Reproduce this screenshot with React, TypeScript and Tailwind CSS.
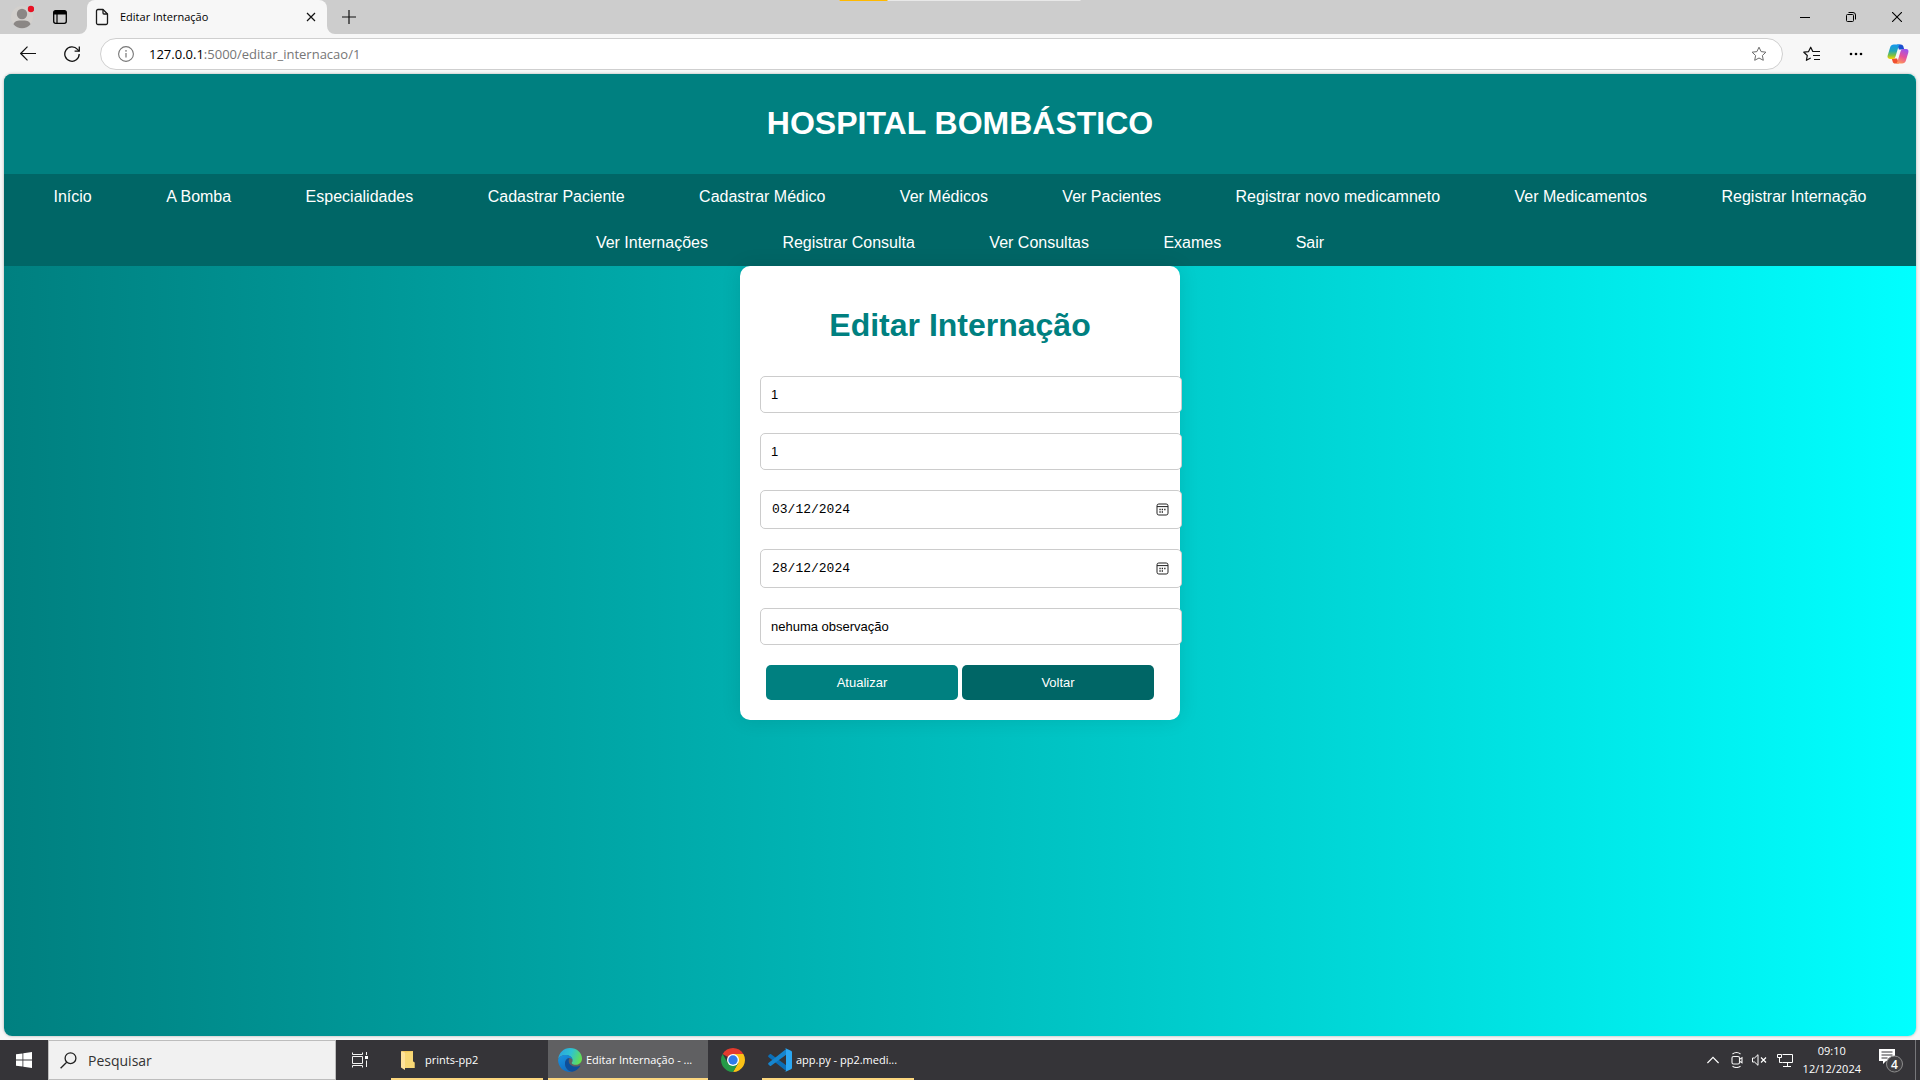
import React from "react";

const uiFont = "font-['Open_Sans',sans-serif]";
const pageFont = "font-['Liberation_Sans',Arial,sans-serif]";

const navLinks = [
  "Início",
  "A Bomba",
  "Especialidades",
  "Cadastrar Paciente",
  "Cadastrar Médico",
  "Ver Médicos",
  "Ver Pacientes",
  "Registrar novo medicamneto",
  "Ver Medicamentos",
  "Registrar Internação",
  "Ver Internações",
  "Registrar Consulta",
  "Ver Consultas",
  "Exames",
  "Sair",
];

function TabStrip() {
  return (
    <div className="relative flex h-[34px] items-center bg-[#cdcdcd] text-black">
      <button aria-label="Perfil" className="ml-[10px] flex size-6 items-center justify-center">
        <svg width="24" height="24" viewBox="0 0 24 24">
          <circle cx="12" cy="12" r="11" fill="#d3d0cd" />
          <circle cx="12" cy="9" r="5.2" fill="#8b8785" />
          <path d="M3.5 19.2C4.500 15.800 8 15.500 12 15.500s7.500.3 8.500 3.700A11 11 0 0 1 3.500 19.200z" fill="#8b8785" />
          <circle cx="21" cy="4" r="3.200" fill="#e81224" />
        </svg>
      </button>
      <button aria-label="Menu de guias" className="ml-[18px] flex size-4 items-center justify-center">
        <svg width="16" height="16" viewBox="0 0 16 16" fill="none" stroke="#000">
          <rect x="1.700" y="1.700" width="12.600" height="12.600" rx="2" strokeWidth="1.300" />
          <path d="M1.500 4a2.500 2.500 0 0 1 2.500-2.500h8A2.500 2.500 0 0 1 14.500 4v1.500h-13z" fill="#000" stroke="none" />
          <path d="M5 5v9" strokeWidth="1.200" />
        </svg>
      </button>
      <div className="ml-[11px] flex h-full items-end">
        <svg width="8" height="8" viewBox="0 0 8 8"><path d="M8 0v8H0a8 8 0 0 0 8-8z" fill="#f7f7f7" /></svg>
        <div className="flex h-[34px] w-60 items-center rounded-t-lg bg-[#f7f7f7] pr-2 pl-2">
          <svg width="14" height="18" viewBox="0 0 14 18" fill="none" stroke="#1b1b1b" strokeWidth="1.300" strokeLinejoin="round">
            <path d="M3 1.500h5L12.500 6v9a1.500 1.500 0 0 1-1.500 1.500H3A1.500 1.500 0 0 1 1.500 15V3A1.500 1.500 0 0 1 3 1.500z" />
            <path d="M8 1.500V5a1 1 0 0 0 1 1h3.500" />
          </svg>
          <span className="ml-[11px] flex-1 text-[11px] leading-4 whitespace-nowrap">Editar Internação</span>
          <button aria-label="Fechar guia" className="flex size-4 items-center justify-center">
            <svg width="10" height="10" viewBox="0 0 10 10" stroke="#111" strokeWidth="1.200"><path d="M1 1l8 8M9 1L1 9" /></svg>
          </button>
        </div>
        <svg width="8" height="8" viewBox="0 0 8 8"><path d="M0 0v8h8a8 8 0 0 1-8-8z" fill="#f7f7f7" /></svg>
      </div>
      <button aria-label="Nova guia" className="ml-[6px] flex size-4 items-center justify-center">
        <svg width="14" height="14" viewBox="0 0 14 14" stroke="#111" strokeWidth="1.200"><path d="M7 0v14M0 7h14" /></svg>
      </button>
      <div className="ml-auto flex h-full">
        <button aria-label="Minimizar" className="flex w-[46px] items-center justify-center">
          <svg width="10" height="10" viewBox="0 0 10 10" stroke="#000"><path d="M0 5.500h10" /></svg>
        </button>
        <button aria-label="Restaurar" className="flex w-[46px] items-center justify-center">
          <svg width="10" height="10" viewBox="0 0 10 10" fill="none" stroke="#000">
            <rect x=".5" y="2.500" width="7" height="7" rx="1" />
            <path d="M2.500.5H7A2.500 2.500 0 0 1 9.500 3v4.500" />
          </svg>
        </button>
        <button aria-label="Fechar" className="flex w-[46px] items-center justify-center">
          <svg width="10" height="10" viewBox="0 0 10 10" stroke="#000" strokeWidth="1.100"><path d="M0 0l10 10M10 0L0 10" /></svg>
        </button>
      </div>
      <div className="absolute top-0 left-1/2 flex h-px w-[241px] -translate-x-1/2 bg-[#e8e8e8]">
        <div className="h-px w-12 bg-[#ffb900]" />
      </div>
    </div>
  );
}

const starPath = "M8 1.200l2.100 4.400 4.800.6-3.500 3.300.9 4.800L8 12l-4.300 2.300.9-4.800L1.100 6.200l4.800-.6z";

function Toolbar() {
  return (
    <div className="flex h-10 items-center bg-[#f7f7f7] pr-[10px] pl-5">
      <button aria-label="Voltar à página anterior" className="flex size-4 items-center justify-center">
        <svg width="16" height="16" viewBox="0 0 16 16" fill="none" stroke="#111" strokeWidth="1.200"><path d="M16 7.500H.8M7.500.7L.7 7.500l6.800 6.800" /></svg>
      </button>
      <button aria-label="Atualizar página" className="ml-7 flex size-4 items-center justify-center">
        <svg width="16" height="16" viewBox="0 0 16 16" fill="none" stroke="#111" strokeWidth="1.300">
          <path d="M15.200 8A7.200 7.200 0 1 1 13.500 3.400L15 5" />
          <path d="M15.300.5V5.200H10.600" />
        </svg>
      </button>
      <div className="ml-5 flex h-8 flex-1 items-center rounded-full border border-[#cfcfcf] bg-white pr-[15px] pl-[17px]">
        <svg width="16" height="16" viewBox="0 0 16 16" fill="none" stroke="#767676">
          <circle cx="8" cy="8" r="7.400" strokeWidth="1.100" />
          <path d="M8 7v4.500" strokeWidth="1.200" />
          <circle cx="8" cy="4.900" r=".8" fill="#767676" stroke="none" />
        </svg>
        <a href="#endereco" className="ml-[15px] flex-1 text-[13px] leading-5 text-[#767676]">
          <span className="text-black">127.0.0.1</span>:5000/editar_internacao/1
        </a>
        <button aria-label="Adicionar aos favoritos" className="flex size-4 items-center justify-center">
          <svg width="16" height="16" viewBox="0 0 16 16" fill="none" stroke="#6b6b6b" strokeLinejoin="round"><path d={starPath} /></svg>
        </button>
      </div>
      <button aria-label="Favoritos" className="ml-5 flex h-4 w-[17px] items-center justify-center">
        <svg width="17" height="16" viewBox="0 0 17 16" fill="none" stroke="#111" strokeWidth="1.200" strokeLinejoin="round">
          <path d="M15 5.500H9.800L7.700 1.200 5.600 5.600.8 6.200l3.500 3.300-.9 4.800L7.700 12" />
          <path d="M11 5.500h6M10 9.500h7M11 13.500h6" />
        </svg>
      </button>
      <button aria-label="Configurações e mais" className="ml-7 flex size-4 items-center justify-center">
        <svg width="14" height="4" viewBox="0 0 14 4"><circle cx="2" cy="2" r="1.300" /><circle cx="7" cy="2" r="1.300" /><circle cx="12" cy="2" r="1.300" /></svg>
      </button>
      <button aria-label="Copilot" className="ml-[22px] flex size-6 items-center justify-center">
        <svg width="22" height="20" viewBox="0 0 24 22">
          <defs>
            <linearGradient id="cpA" x1="0" y1="0" x2="0" y2="1">
              <stop offset="0" stopColor="#1497f0" /><stop offset=".45" stopColor="#22a7b5" /><stop offset=".75" stopColor="#7fc241" /><stop offset="1" stopColor="#ffd400" />
            </linearGradient>
            <linearGradient id="cpB" x1=".7" y1="0" x2=".3" y2="1">
              <stop offset="0" stopColor="#9a54f0" /><stop offset=".5" stopColor="#e6519b" /><stop offset="1" stopColor="#ff9a56" />
            </linearGradient>
          </defs>
          <path d="M11 .5h4c1.700 0 2.400.8 2.900 2.300l1 3.200H13z" fill="#1a4fd0" />
          <path d="M13 21.500H9c-1.700 0-2.400-.8-2.900-2.300l-1-3.200H11z" fill="#f0502f" />
          <path d="M7.500.5H15c-1.300 0-2 1-2.500 2.500L9.500 13c-.7 2.300-1.500 3.500-3.800 3.500H3c-2.200 0-3-1.700-2.300-4L3.400 3.500C4.100 1.500 5.300.5 7.500.5z" fill="url(#cpA)" />
          <path d="M16.500 21.500H9c1.300 0 2-1 2.500-2.500l3-10c.7-2.300 1.500-3.500 3.800-3.500H21c2.200 0 3 1.700 2.300 4L20.600 18.500c-.7 2-1.900 3-4.100 3z" fill="url(#cpB)" />
        </svg>
      </button>
    </div>
  );
}

const fieldClass =
  "mb-5 box-content block h-[15px] w-full rounded-[5px] border border-[#cccccc] bg-white p-[10px] text-[13px] leading-[15px] text-black outline-none";

function DateField({ label, value }: { label: string; value: string }) {
  return (
    <div className="mb-5 box-content flex h-[17px] w-full items-center rounded-[5px] border border-[#cccccc] bg-white p-[10px]">
      <input
        aria-label={label}
        type="text"
        defaultValue={value}
        className="min-w-0 flex-1 pt-px pl-px font-['Liberation_Mono',monospace] text-[13px] leading-4 text-black outline-none"
      />
      <button type="button" aria-label={"Abrir calendário: " + label} className="mr-[2px] flex size-[13px] items-center justify-center">
        <svg width="13" height="13" viewBox="0 0 13 13" fill="none" stroke="#222">
          <rect x="1" y="1" width="11" height="11" rx="1.800" />
          <path d="M1 3.600h11" />
          <path d="M5.700 6.500h1.300M8.200 6.500h1.300M3.400 9h1.300M5.700 9h1.300M3.400 6.500h1.300" strokeWidth="1.300" />
        </svg>
      </button>
    </div>
  );
}

function HospitalPage() {
  return (
    <main className={"flex-1 rounded-lg overflow-hidden bg-linear-to-r from-[#008080] to-[#00ffff] shadow-[0_0_3px_rgba(0,0,0,0.3)] " + pageFont}>
      <header className="bg-[#008080] pt-[29px] pb-[31px] text-center">
        <h1 className="text-[32px] leading-10 font-bold text-white">HOSPITAL BOMBÁSTICO</h1>
      </header>
      <nav className="bg-[#006666] text-center text-base">
        <ul>
          {navLinks.map((link) => (
            <React.Fragment key={link}>
              <li className="mx-[15px] inline-block align-top">
                <a href="#pagina" className="block px-5 py-[14px] leading-[18px] text-white">{link}</a>
              </li>{" "}
            </React.Fragment>
          ))}
        </ul>
      </nav>
      <section className="mx-auto w-[440px] rounded-[10px] bg-white p-5 shadow-[0_0_20px_rgba(0,0,0,0.1)]">
        <h1 className="mt-[19px] mb-[31px] text-center text-[32px] leading-10 font-bold text-[#008080]">Editar Internação</h1>
        <form onSubmit={(e) => e.preventDefault()}>
          <input aria-label="Paciente" defaultValue="1" className={fieldClass} />
          <input aria-label="Médico" defaultValue="1" className={fieldClass} />
          <DateField label="Data de entrada" value="03/12/2024" />
          <DateField label="Data de saída" value="28/12/2024" />
          <input aria-label="Observações" defaultValue="nehuma observação" className={fieldClass} />
          <div className="flex justify-center gap-1 text-[13px] leading-[15px] text-white">
            <button type="submit" className="w-[48%] rounded-[5px] bg-[#008080] p-[10px]">Atualizar</button>
            <button type="button" className="w-[48%] rounded-[5px] bg-[#006666] p-[10px]">Voltar</button>
          </div>
        </form>
      </section>
    </main>
  );
}

function EdgeIcon() {
  return (
    <svg width="24" height="24" viewBox="0 0 24 24">
      <defs>
        <linearGradient id="edTop" x1="0" y1=".3" x2="1" y2=".6">
          <stop offset="0" stopColor="#2aa5e0" /><stop offset=".5" stopColor="#2fc3d0" /><stop offset="1" stopColor="#66e04c" />
        </linearGradient>
        <linearGradient id="edLeft" x1="0" y1="0" x2=".5" y2="1">
          <stop offset="0" stopColor="#1a94e0" /><stop offset="1" stopColor="#0f6fc4" />
        </linearGradient>
      </defs>
      <path d="M.2 11C.8 4.800 5.800 0 12 0c7 0 12 5 12 10.500 0 4-3 6.300-6.300 6.300-2.200 0-4-.9-4-1.800 0-.6.9-.9.9-2.500C14.600 9.500 11.500 7 8 7 4 7 1 9 .2 11z" fill="url(#edTop)" />
      <path d="M.1 12C.4 9 4 7 8 7c4 0 6.600 2.500 6.600 5-.6-1.300-1.800-2-3-2-2.600 0-4.600 2.500-4.600 5.700 0 4.300 3.500 7.800 7.300 8-1 .2-1.600.3-2.300.3C5.400 24 .1 19 .1 12z" fill="url(#edLeft)" />
      <path d="M11.500 10C9 10.200 7 12.500 7 15.700c0 4.300 3.500 7.600 7.300 8 3.500-.6 6.300-2.800 7.900-5.400.3-.6-.1-.9-.6-.6-1.200.6-2.500.9-3.900.9-4 0-7-2.600-7-5.600 0-1.200.3-2.200.8-3z" fill="#0c4f9c" />
    </svg>
  );
}

function ChromeIcon() {
  return (
    <svg width="24" height="24" viewBox="0 0 24 24">
      <path d="M12 12L1.610 6A12 12 0 0 1 22.390 6z" fill="#e33b2e" />
      <path d="M12 6h10.390A12 12 0 0 1 12 24l5.200-9z" fill="#fbc116" />
      <path d="M6.800 15L1.610 6A12 12 0 0 0 12 24l5.200-9z" fill="#259b48" />
      <circle cx="12" cy="12" r="6" fill="#fff" />
      <circle cx="12" cy="12" r="4.700" fill="#2f7bea" />
    </svg>
  );
}

function CodeIcon() {
  return (
    <svg width="24" height="24" viewBox="0 0 24 24">
      <path d="M.4 7.600L1.800 6.200c.4-.3.900-.3 1.300 0L18.500 17.500v5.800L.4 8.900c-.4-.4-.4-.9 0-1.300z" fill="#0b6fb8" />
      <path d="M.4 16.400l1.400 1.400c.4.3.9.3 1.300 0L18.500 6.500V.7L.4 15.100c-.4.4-.4.9 0 1.300z" fill="#1585cf" />
      <path d="M16.500.8c.4-.5 1-.7 1.600-.4L23 2.800c.6.300 1 .8 1 1.500v15.400c0 .7-.4 1.200-1 1.500l-4.900 2.400c-.6.3-1.200.1-1.600-.4.800.6 1.500 0 1.500-.8V1.600c0-.8-.7-1.400-1.500-.8z" fill="#2ba7f3" />
    </svg>
  );
}

function Taskbar() {
  return (
    <footer className="flex h-10 bg-[#353438] text-[11px] leading-4 text-white">
      <button aria-label="Iniciar" className="flex w-12 items-center justify-center">
        <svg width="16" height="16" viewBox="0 0 16 16" fill="#fff">
          <path d="M0 2.300L6.500 1.400V7.600H0zM7.300 1.300L16 0v7.600H7.300zM0 8.400h6.500v6.200L0 13.700zM7.300 8.400H16V16l-8.700-1.300z" />
        </svg>
      </button>
      <label className="flex w-72 items-center border border-[#bdbdbd] bg-[#f1f1f1] pl-[11px]">
        <svg width="17" height="17" viewBox="0 0 17 17" fill="none" stroke="#222" strokeWidth="1.300">
          <circle cx="10.500" cy="6.200" r="5.400" /><path d="M6.700 10.200L.6 16.300" />
        </svg>
        <input aria-label="Pesquisar" placeholder="Pesquisar" className="ml-[11px] min-w-0 flex-1 bg-transparent pt-px text-sm leading-5 outline-none placeholder:text-[#333]" />
      </label>
      <button aria-label="Visão de tarefas" className="flex w-12 items-center justify-center">
        <svg width="16" height="16" viewBox="0 0 16 16" fill="none" stroke="#f2f2f2">
          <path d="M.5.500v2h10v-2M.5 15.500v-2h10v2M.5 4.500h10v7H.5zM14.500 0v3M14.500 8.500V15" />
          <path d="M13 4h3v3h-3z" fill="#fff" stroke="none" />
        </svg>
      </button>
      <button className="ml-[7px] flex w-[152px] items-center border-b-2 border-[#fcd77f] pt-[2px] pl-[9px]">
        <svg width="15" height="20" viewBox="0 0 15 20">
          <path d="M2 1h11v10.500l1.500 1V18H4z" fill="#f2c658" />
          <path d="M1 1l4 1.500V20l-4-2.500z" fill="#ffe29a" />
          <path d="M5 2.500l8-1v10l1.500 1V18H5z" fill="#f8d775" />
        </svg>
        <span className="ml-[10px]">prints-pp2</span>
      </button>
      <button className="ml-[5px] flex w-40 items-center border-b-2 border-[#fcd77f] bg-[#606062] pt-[2px] pl-[10px]">
        <EdgeIcon />
        <span className="ml-1 whitespace-nowrap">Editar Internação - ...</span>
      </button>
      <button aria-label="Google Chrome" className="ml-px flex w-12 items-center justify-center">
        <ChromeIcon />
      </button>
      <button className="ml-[5px] flex w-[152px] items-center border-b-2 border-[#fcd77f] pt-[2px] pl-[6px]">
        <CodeIcon />
        <span className="ml-1 whitespace-nowrap">app.py - pp2.medi...</span>
      </button>
      <div className="ml-auto flex items-center">
        <button aria-label="Mostrar ícones ocultos">
          <svg width="12" height="8" viewBox="0 0 12 8" fill="none" stroke="#fff" strokeWidth="1.200"><path d="M.4 7L6 1.400 11.600 7" /></svg>
        </button>
        <button aria-label="Reunir agora" className="ml-3">
          <svg width="12" height="16" viewBox="0 0 12 16" fill="none" stroke="#f2f2f2" strokeWidth="1.100">
            <rect x="1" y="4.500" width="7.500" height="7.500" rx="1.500" />
            <path d="M8.500 7.300l2.500-1.500v5L8.500 9.300M1.500 2C4 .2 7 .2 9.500 2M1.500 14.200c2.500 1.700 5.500 1.700 8 0" />
          </svg>
        </button>
        <button aria-label="Volume mudo" className="ml-[9px]">
          <svg width="15" height="12" viewBox="0 0 15 12" fill="none" stroke="#fff">
            <path d="M.5 4v4h2l3.500 3.300V.7L2.500 4z" /><path d="M9 3.500l5 5M14 3.500l-5 5" strokeWidth="1.200" />
          </svg>
        </button>
        <button aria-label="Rede" className="ml-[10px]">
          <svg width="16" height="14" viewBox="0 0 16 14" fill="none" stroke="#fff">
            <path d="M5.500 1.500h10v8h-10M.5 1.500h4v3h-4zM2.500 4.500v5h3M10.500 9.500v3.500M6 13.500h8" />
          </svg>
        </button>
        <button className="ml-[10px] flex flex-col items-center justify-center leading-[18px]">
          <span>09:10</span>
          <span>12/12/2024</span>
        </button>
        <button aria-label="Notificações" className="ml-[17px]">
          <svg width="26" height="26" viewBox="0 0 26 26">
            <path d="M1 2h16v12H8l-3 3v-3H1z" fill="#fff" />
            <path d="M3.500 5h11M3.500 8h11M3.500 11h6" stroke="#353438" />
            <circle cx="16.500" cy="17" r="8" fill="#403f42" stroke="#8d8d8d" />
            <text x="16.500" y="21.500" textAnchor="middle" fontSize="12" fontWeight="600" fill="#fff" className="font-['Open_Sans',sans-serif]">4</text>
          </svg>
        </button>
        <div className="ml-[11px] h-10 w-px bg-[#77777a]" />
        <div className="w-1" />
      </div>
    </footer>
  );
}

export default function App() {
  return (
    <div className={"flex min-h-screen flex-col bg-[#f7f7f7] " + uiFont}>
      <TabStrip />
      <Toolbar />
      <div className="flex flex-1 flex-col px-1 pb-1">
        <HospitalPage />
      </div>
      <Taskbar />
    </div>
  );
}
